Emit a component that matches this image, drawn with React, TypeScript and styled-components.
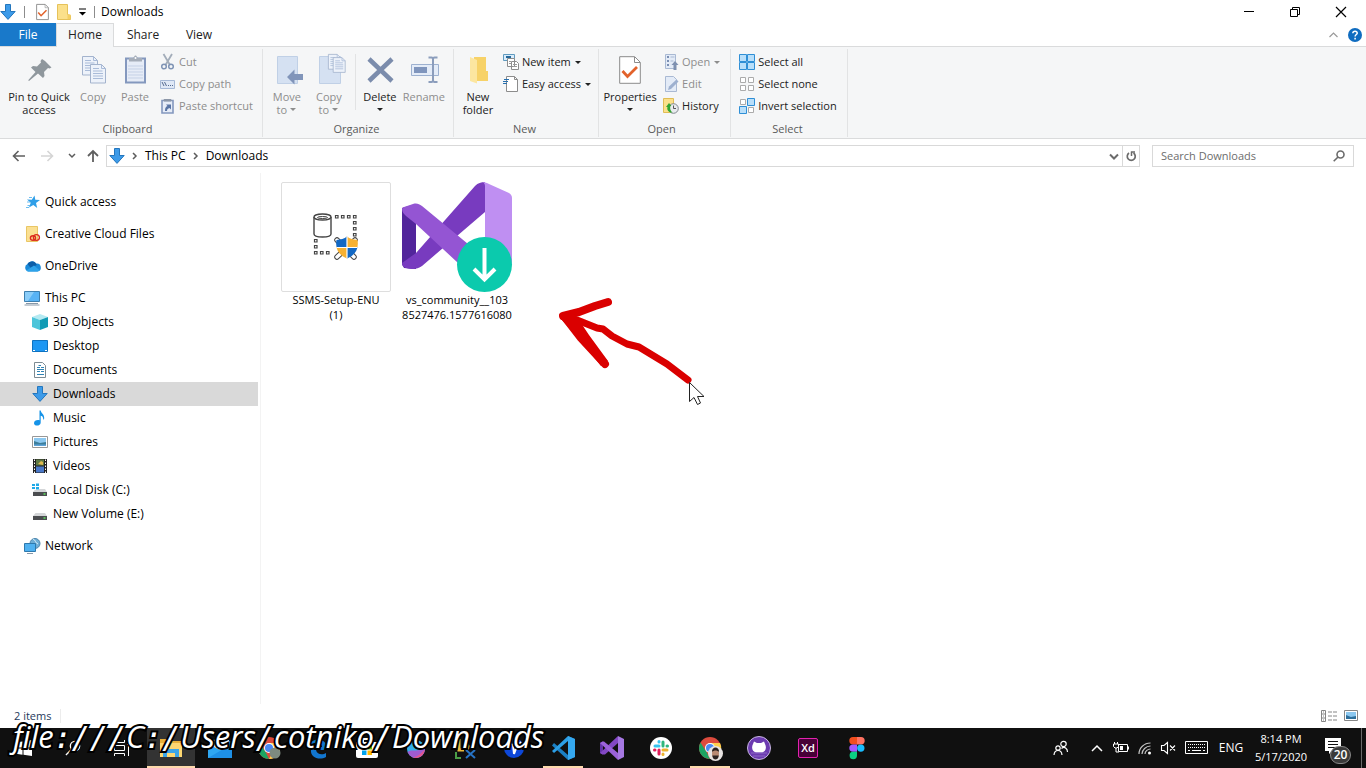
import React from "react";
import styled, { createGlobalStyle } from "styled-components";

const Global = createGlobalStyle`
  * { box-sizing: border-box; }
  html, body { margin: 0; height: 100%; }
  #root { height: 100%; }
  body { background: #fff; color: #000; overflow: hidden; }
  body, button, input { font-family: "Open Sans", "Noto Sans", sans-serif; font-size: 12px; line-height: 16px; }
  button { border: 0; padding: 0; margin: 0; background: transparent; color: inherit; }
  svg { display: block; flex: none; overflow: visible; }
`;

/* ---------- shell ---------- */

const Window = styled.div`
  position: relative;
  display: flex;
  flex-direction: column;
  height: 100vh;
`;

const TitleBar = styled.header`
  display: flex;
  align-items: center;
  height: 23px;
  padding-right: 2px;
`;

const Divider = styled.span<{ $h: number; $color?: string; $after?: number }>`
  flex: none;
  width: 1px;
  height: ${(p) => p.$h}px;
  margin-right: ${(p) => p.$after || 0}px;
  background: ${(p) => p.$color || "#8c8c8c"};
`;

const QuickTools = styled.div`
  display: flex;
  align-items: center;
  gap: 8px;
  padding-right: 6px;
`;

const Title = styled.h1`
  flex: 1;
  margin: 0;
  font-size: 12px;
  font-weight: 400;
`;

const IconButton = styled.button<{ $w?: number }>`
  display: flex;
  align-items: center;
  justify-content: center;
  flex: none;
  width: ${(p) => (p.$w ? p.$w + "px" : "auto")};
  align-self: stretch;
`;

const Tabs = styled.nav`
  display: flex;
  height: 24px;
  border-bottom: 1px solid #dadbdc;
`;

const Tab = styled.button<{ $kind?: "file" | "active"; $w: number }>`
  width: ${(p) => p.$w}px;
  height: ${(p) => (p.$kind === "active" ? 24 : 23)}px;
  color: ${(p) => (p.$kind === "file" ? "#fff" : "#222")};
  background: ${(p) => (p.$kind === "file" ? "#1979ca" : p.$kind === "active" ? "#f5f6f7" : "transparent")};
  border: ${(p) => (p.$kind === "active" ? "1px solid #dadbdc" : "0")};
  border-bottom: 0;
  padding-bottom: ${(p) => (p.$kind === "active" ? 2 : 0)}px;
`;

const TabTools = styled.div`
  display: flex;
  align-items: center;
  gap: 10px;
  margin-left: auto;
  padding-right: 4px;
`;

/* ---------- ribbon ---------- */

const Ribbon = styled.div`
  display: flex;
  height: 92px;
  padding-top: 2px;
  background: #f5f6f7;
  border-bottom: 1px solid #dadbdc;
`;

const Group = styled.section<{ $pad: string }>`
  display: flex;
  flex-direction: column;
  height: 88px;
  padding: ${(p) => p.$pad};
  border-right: 1px solid #e2e3e4;
`;

const GroupBody = styled.div`
  display: flex;
  height: 73px;
`;

const GroupName = styled.h2`
  margin: 0;
  font-size: 11px;
  font-weight: 400;
  text-align: center;
  color: #5a5a5a;
`;

const BigButton = styled.button<{ $w: number }>`
  display: flex;
  flex-direction: column;
  align-items: center;
  gap: 4px;
  width: ${(p) => p.$w}px;
  padding-top: 5px;
  font-size: 11px;
  line-height: 13px;
  white-space: nowrap;
  color: #222;
  &:disabled { color: #8d8d8d; }
`;

const BigLabel = styled.span`
  display: flex;
  flex-direction: column;
  align-items: center;
`;

const Line = styled.span`
  display: flex;
  align-items: center;
  gap: 2px;
  height: 13px;
`;

const SmallColumn = styled.div<{ $left: number }>`
  display: flex;
  flex-direction: column;
  padding: 2px 0 0 ${(p) => p.$left}px;
`;

const SmallButton = styled.button`
  display: flex;
  align-items: center;
  gap: 3px;
  height: 22px;
  font-size: 11px;
  white-space: nowrap;
  color: #222;
  &:disabled { color: #8d8d8d; }
`;

const Caret = styled.i`
  flex: none;
  margin: 0 1px;
  border: 3px solid transparent;
  border-top-color: currentColor;
  border-bottom: 0;
`;

const InnerRule = styled.span`
  width: 1px;
  height: 56px;
  margin: 5px 3px 0 5px;
  background: #e2e3e4;
`;

/* ---------- address row ---------- */

const AddressRow = styled.div`
  display: flex;
  align-items: center;
  height: 34px;
  padding-right: 12px;
`;

const NavButtons = styled.div`
  display: flex;
  align-items: center;
  gap: 11px;
  width: 106px;
  padding-left: 12px;
`;

const AddressBox = styled.div`
  display: flex;
  align-items: center;
  flex: 1;
  height: 22px;
  padding-left: 2px;
  border: 1px solid #d9d9d9;
`;

const Crumbs = styled.div`
  display: flex;
  align-items: center;
  flex: 1;
  gap: 6px;
`;

const Crumb = styled.a`
  color: #000;
  text-decoration: none;
`;

const SearchBox = styled.label`
  display: flex;
  align-items: center;
  width: 202px;
  height: 22px;
  margin-left: 12px;
  padding: 0 8px;
  border: 1px solid #d9d9d9;
`;

const SearchInput = styled.input`
  flex: 1;
  min-width: 0;
  padding: 0;
  border: 0;
  outline: 0;
  background: transparent;
  font-size: 11px;
  &::placeholder { color: #6d6d6d; opacity: 1; }
`;

/* ---------- body ---------- */

const Main = styled.div`
  display: flex;
  flex: 1;
  min-height: 0;
`;

const Sidebar = styled.nav`
  width: 261px;
  padding: 17px 2px 0 0;
  border-right: 1px solid #f3f3f3;
`;

const TreeItem = styled.a<{ $child?: boolean; $selected?: boolean; $gap?: boolean }>`
  display: flex;
  align-items: center;
  gap: 5px;
  height: 24px;
  margin-bottom: ${(p) => (p.$gap ? 8 : 0)}px;
  padding-left: ${(p) => (p.$child ? 32 : 24)}px;
  background: ${(p) => (p.$selected ? "#d9d9d9" : "transparent")};
  color: #000;
  text-decoration: none;
`;

const Files = styled.main`
  position: relative;
  display: flex;
  align-items: flex-start;
  flex: 1;
  gap: 11px;
  padding: 9px 20px;
`;

const FileTile = styled.figure`
  width: 110px;
  margin: 0;
`;

const Thumb = styled.div<{ $framed?: boolean }>`
  display: flex;
  align-items: center;
  justify-content: center;
  height: 110px;
  border: ${(p) => (p.$framed ? "1px solid #dedede" : "0")};
  border-radius: 2px;
`;

const FileName = styled.figcaption`
  text-align: center;
  font-size: 11px;
  line-height: 15px;
  white-space: nowrap;
`;

const RedArrow = styled.svg`
  position: absolute;
  left: 294px;
  top: 122px;
`;

const StatusBar = styled.footer`
  display: flex;
  align-items: center;
  gap: 9px;
  height: 24px;
  padding: 0 8px 0 14px;
  color: #1e395b;
  font-size: 11px;
`;

const ViewButtons = styled.div`
  display: flex;
  gap: 7px;
  margin-left: auto;
`;

/* ---------- taskbar ---------- */

const Taskbar = styled.div`
  display: flex;
  height: 40px;
  background: #101010;
  color: #fff;
`;

const Task = styled.button<{ $open?: boolean; $active?: boolean }>`
  position: relative;
  display: flex;
  align-items: center;
  justify-content: center;
  width: 48px;
  margin-right: 1px;
  background: ${(p) => (p.$active ? "#333" : "transparent")};
  &::after {
    content: "";
    position: absolute;
    bottom: 0;
    left: ${(p) => (p.$active ? 0 : 4)}px;
    right: ${(p) => (p.$active ? 0 : 4)}px;
    height: 2px;
    background: ${(p) => (p.$open ? "#fdd9ac" : "transparent")};
  }
`;

const Tray = styled.div`
  display: flex;
  align-items: center;
  margin-left: auto;
`;

const TrayButton = styled.button<{ $w: number }>`
  display: flex;
  align-items: center;
  justify-content: center;
  width: ${(p) => p.$w}px;
  height: 40px;
`;

const Clock = styled.time`
  width: 64px;
  text-align: center;
  font-size: 11px;
  line-height: 18px;
`;

const Notify = styled.button`
  position: relative;
  width: 24px;
  height: 40px;
  margin: 0 12px 0 12px;
`;

const NotifyGlyph = styled.span`
  display: block;
  padding-bottom: 4px;
`;

const Badge = styled.span`
  position: absolute;
  left: 5px;
  top: 18px;
  width: 21px;
  border: 1px solid #888;
  border-radius: 9px;
  background: #3a3a3a;
  color: #fff;
  font-weight: 600;
  line-height: 16px;
  text-align: center;
`;

const PathOverlay = styled.div`
  position: absolute;
  left: 13px;
  bottom: 10px;
  font: italic 500 31px/40px "Open Sans", "Noto Sans", sans-serif;
  color: #fff;
  white-space: nowrap;
  -webkit-text-stroke: 4px #000;
  paint-order: stroke fill;
`;

const Punct = styled.span`
  font-family: "DejaVu Sans Mono", monospace;
  font-size: 30px;
`;

const Cursor = styled.svg`
  position: absolute;
  left: 428px;
  top: 209px;
`;

/* ---------- icons ---------- */

type SvgProps = { w: number; h?: number; children: React.ReactNode };
const Svg = ({ w, h = w, children }: SvgProps) => (
  <svg width={w} height={h} viewBox={`0 0 ${w} ${h}`} fill="none" aria-hidden="true">
    {children}
  </svg>
);

const DownArrow = () => (
  <Svg w={16}>
    <path d="M5.500.500h5v7h4.700L8 15.400.8 7.500h4.700z" fill="#3d9be9" stroke="#2476bd" />
  </Svg>
);

const CheckSheet = ({ big }: { big?: boolean }) => (
  <svg width={big ? 22 : 13} height={big ? 28 : 16} viewBox="0 0 22 28" fill="none">
    <path d="M.7.7h15l5.600 5.600v21H.7z" fill="#fff" stroke="#8b8b8b" strokeWidth={big ? 1 : 1.6} />
    <path d="M15.500 1v5.500H21" stroke="#8b8b8b" />
    <path d="M3.500 15l5 5.500L18 11" stroke="#e2622b" strokeWidth="2.800" />
  </svg>
);

const YellowFolder = () => (
  <Svg w={14} h={16}>
    <path d="M.5.500h10v10l3 1v4H.5z" fill="#fbe08b" stroke="#e6c25a" />
    <path d="M10.500 10.500h3v4.500h-3z" fill="#f4cf63" />
  </Svg>
);

const Pin = () => (
  <Svg w={32}>
    <path d="M22 6l6.500 6.500-2 1-1.500-.5-4 4 .5 4-1.500 2-5-4.500L6 26l-.8-.8L12.500 17 8 12.500l2-1.500 4 .5 4-4-.5-1.500 1.500-2z" fill="#8f979d" transform="translate(0 1)" />
  </Svg>
);

const Page = ({ x, y }: { x: number; y: number }) => (
  <g transform={`translate(${x} ${y})`}>
    <path d="M.5.500h11l4 4v14.500H.5z" fill="#edf2fa" stroke="#a3b3cd" />
    <path d="M11.500.500v4h4M3 7h9.500M3 9.500h10M3 12h10M3 14.500h10M3 4.500h6" stroke="#a9bbd8" />
  </g>
);

const CopyIcon = () => (
  <Svg w={32}>
    <g transform="translate(5 2)">
      <Page x={0} y={0} />
      <Page x={8} y={8} />
    </g>
  </Svg>
);

const PasteIcon = () => (
  <Svg w={32}>
    <path d="M7 4.500h19v24H7z" fill="#e6ecf7" stroke="#8498be" strokeWidth="2" />
    <path d="M9 12h15M9 15h15M9 18h15M9 21h15M9 24h15" stroke="#c5d1e6" />
    <path d="M10 7.500V4h4l2-2.500h1L19 4h4v3.500z" fill="#a5adb9" />
    <circle cx="16.500" cy="4" r="1" fill="#fff" />
  </Svg>
);

const CutIcon = () => (
  <Svg w={16}>
    <path d="M3.500 0l6.500 11M12 0L5.500 11" stroke="#a3adba" strokeWidth="1.800" />
    <circle cx="4" cy="12.500" r="2.300" stroke="#7f94b5" strokeWidth="1.500" />
    <circle cx="11" cy="12.500" r="2.300" stroke="#7f94b5" strokeWidth="1.500" />
  </Svg>
);

const PathIcon = () => (
  <Svg w={16}>
    <path d="M.5 4.500h14v8H.5z" fill="#dfe8f6" stroke="#a5b8d6" />
    <path d="M2 6l2 4M4.500 6l2 4M8 9.500h1M10 9.500h1M12 9.500h1" stroke="#53698f" />
  </Svg>
);

const ShortcutIcon = () => (
  <Svg w={16}>
    <path d="M2 2.500h11v12.500H2z" fill="#e6ecf7" stroke="#8498be" strokeWidth="1.600" />
    <path d="M4 3V1.500h7V3z" fill="#8c97a8" stroke="#8c97a8" />
    <path d="M5 13c0-3.500 1-4.500 2.500-5L6 6.500h5v5L9.500 10C8 10.500 7 11 7 13z" fill="#5a75a5" />
  </Svg>
);

const MoveIcon = () => (
  <Svg w={32}>
    <path d="M6.500 2.500h20v27h-20z" fill="#d5e1f2" stroke="#c0d0e6" />
    <path d="M16 23l7.500-7.500v4.500H32v6h-8.500v4.500z" fill="#8195ba" />
  </Svg>
);

const CopyToIcon = () => (
  <Svg w={32}>
    <path d="M6.500 2.500h21v27h-21z" fill="#d5e1f2" stroke="#c0d0e6" />
    <g transform="translate(15 0) scale(.8)">
      <Page x={0} y={0} />
      <Page x={6} y={4} />
    </g>
  </Svg>
);

const DeleteIcon = () => (
  <Svg w={32}>
    <path d="M5 5l23 22M28 5L5 27" stroke="#7b8cac" strokeWidth="4.500" />
  </Svg>
);

const RenameIcon = () => (
  <Svg w={32}>
    <path d="M3.500 10.500h27v11h-27z" fill="#e4ecf8" stroke="#9db1d0" />
    <path d="M6 13h13v6H6z" fill="#7f95bd" />
    <path d="M20.500 3.500h3c1 0 1.500.500 1.500 1.500v21c0 1-.500 2-1.500 2h-3M29.500 3.500h-3c-1 0-1.500.500-1.500 1.500v21c0 1 .5 2 1.500 2h3" stroke="#8b9dbc" strokeWidth="2" />
  </Svg>
);

const NewFolderIcon = () => (
  <Svg w={32}>
    <path d="M12 3h12v14h2v10H12z" fill="#f7d268" />
    <path d="M8 3l7 3v23.500L8 27z" fill="#fce6a0" />
  </Svg>
);

const NewItemIcon = () => (
  <Svg w={16}>
    <path d="M.5.500h11v6H.5z" fill="#d9ecfb" stroke="#5f9abf" />
    <path d="M3 3h5" stroke="#26689a" strokeWidth="2" />
    <path d="M4.500 4.500h7v8h-7zM8.500 7.500h5l2 2v6h-7z" fill="#fff" stroke="#8c8c8c" />
    <path d="M10 10.500h4M10 12.500h4M6 7.500h2M6 9.500h2" stroke="#9a9a9a" />
  </Svg>
);

const EasyIcon = () => (
  <Svg w={16}>
    <path d="M3.500.500h8l3 3v12h-11z" fill="#fff" stroke="#8c8c8c" />
    <path d="M11.500.500v3h3" stroke="#8c8c8c" />
    <path d="M1 3.500h5M0 5.500h5M0 7.500h4" stroke="#276fae" />
  </Svg>
);

const OpenIcon = () => (
  <Svg w={16}>
    <path d="M2.500.500h10v14h-10z" fill="#e3ebf7" stroke="#a9b9d3" />
    <path d="M4 3h2M4 7h2M4 11h2" stroke="#7b8fb3" strokeWidth="2" />
    <path d="M7.500 3h4M7.500 7h3" stroke="#a9b9d3" />
    <path d="M12 7l3.500 4h-2v5h-3v-5h-2z" fill="#7e90b0" />
  </Svg>
);

const EditIcon = () => (
  <Svg w={16}>
    <path d="M2.500.500h8l3 3v12h-11z" fill="#e3ebf7" stroke="#a9b9d3" />
    <path d="M5 14l1-3.500 7.500-7 2 2L8 13z" fill="#9db0cf" />
  </Svg>
);

const HistoryIcon = () => (
  <Svg w={16}>
    <path d="M.5.500h10v14H.5z" fill="#fbe08b" stroke="#e0bd55" />
    <circle cx="10.500" cy="10.500" r="4.800" fill="#e8ebee" stroke="#808890" />
    <path d="M10.500 7.500v3h2.500" stroke="#555" />
    <path d="M3 9l3-4 2.500 3H7.500c-1 2 0 5 2 6.500C6 15 3.500 12 4.500 9z" fill="#31a531" />
  </Svg>
);

const Tiles = ({ on }: { on: number[] }) => (
  <Svg w={16}>
    {[0, 1, 2, 3].map((i) => {
      const x = (i % 2) * 8;
      const y = i > 1 ? 8 : 0;
      return on.includes(i) ? (
        <path key={i} d={`M${x + 0.5} ${y + 0.5}h7v7h-7z`} fill="#b9dffa" stroke="#2f8fd6" />
      ) : (
        <path key={i} d={`M${x + 1.5} ${y + 1.5}h5v5h-5z`} fill="#fff" stroke="#ababab" />
      );
    })}
  </Svg>
);

const Chevron = ({ d, w = 8, h = 8, color = "#5c5c5c", sw = 1.5 }: { d: string; w?: number; h?: number; color?: string; sw?: number }) => (
  <Svg w={w} h={h}>
    <path d={d} stroke={color} strokeWidth={sw} />
  </Svg>
);

const StarIcon = () => (
  <Svg w={16}>
    <path d="M10.500 1.500l.8 4.300 4.700.2-4 3 1.200 5L9.300 11 5 13.500l1.700-4.700L3 5.500l4.800.2z" fill="#2f9fe8" />
    <path d="M5 3.500h3M3 8h3M3.500 11.500h2.500M2 13.500h3" stroke="#6cbdf0" />
  </Svg>
);

const CreativeIcon = () => (
  <Svg w={16}>
    <path d="M2.500.500h11v15h-11z" fill="#fbe092" stroke="#e9c665" />
    <ellipse cx="9" cy="12" rx="2.600" ry="2.300" stroke="#dc2b1c" strokeWidth="1.400" />
    <ellipse cx="12.400" cy="11.500" rx="3" ry="2.900" stroke="#dc2b1c" strokeWidth="1.400" />
  </Svg>
);

const OneDriveIcon = () => (
  <Svg w={16}>
    <path d="M4 13.500a4 4 0 01-.5-7.500A5 5 0 0112 5.500a4 4 0 011.500 8z" fill="#1a8ad8" />
    <path d="M3.500 6A5 5 0 0112 5.500l.8 1.500-6 3z" fill="#0c5ea8" />
    <path d="M2 12.800l8-5.300 5.500 4.700a3.500 3.500 0 01-2 1.300H4z" fill="#2ea3ea" />
  </Svg>
);

const PcIcon = () => (
  <Svg w={16}>
    <path d="M.5 1.500h15v10H.5z" fill="#58b3f5" stroke="#3d7fae" />
    <path d="M1 2h9L4 11H1z" fill="#8acdf9" />
    <path d="M2 13.500h12M.5 15h15" stroke="#8798a8" />
  </Svg>
);

const CubeIcon = () => (
  <Svg w={16}>
    <path d="M0 3l8-3 8 3-8 3z" fill="#b5eaf2" />
    <path d="M0 3l8 3v10l-8-3z" fill="#4cc5da" />
    <path d="M16 3L8 6v10l8-3z" fill="#119bb5" />
  </Svg>
);

const DesktopIcon = () => (
  <Svg w={16}>
    <path d="M.5 2.500h15v11H.5z" fill="#1d97f3" stroke="#0f72c0" />
    <path d="M1 12.500h2M13 12.500h2" stroke="#fff" />
  </Svg>
);

const DocIcon = () => (
  <Svg w={16}>
    <path d="M2.500.500h8l3 3v12h-11z" fill="#fff" stroke="#7d8b93" />
    <path d="M5 5.500h3M9 5.500h3M5 7.500h7M5 9.500h3M9 9.500h3M5 12.500h7M6.500 3.500H9" stroke="#2f83b5" />
  </Svg>
);

const MusicIcon = () => (
  <Svg w={16}>
    <path d="M7.500.500h1.200c.5 3 3.800 3.500 3.500 8l-1 1.500c.2-3-1-4-2.500-4.200v6.700c0 4-6.700 4-6.700.8 0-2.800 3-3.600 5.500-3z" fill="#1593e8" />
  </Svg>
);

const PictureIcon = () => (
  <Svg w={16}>
    <path d="M.5 2.500h15v11H.5z" fill="#fff" stroke="#979797" />
    <path d="M2 4h12v8H2z" fill="#8cc8f0" />
    <path d="M2 7l6 2 6-1v4H2z" fill="#3d7e9b" />
    <path d="M2 10.500h12V12H2z" fill="#5da3d8" />
  </Svg>
);

const VideoIcon = () => (
  <Svg w={16}>
    <path d="M1 1h14v14H1z" fill="#222" />
    <path d="M4 1.500h8v6H4z" fill="#5f7a45" />
    <path d="M4 8.500h8v6H4z" fill="#4a79c9" />
    <path d="M6 6l3-3 2 1v3z" fill="#e0b94f" />
    <path d="M2.500 1.500v14M13.500 1.500v14" stroke="#fff" strokeDasharray="1.500 1.500" />
  </Svg>
);

const DriveIcon = ({ system }: { system?: boolean }) => (
  <Svg w={16}>
    <path d="M3.500 7h9.500l2 3H1z" fill="#d4d6d8" />
    <path d="M1 10h14v4H1z" fill="#4b4d50" />
    <path d="M11.500 12h2" stroke="#5be05b" strokeWidth="1.500" />
    {system && (
      <g>
        <path d="M0 1h7v7H0z" fill="#fff" />
        <path d="M0 2h3v2H0zM4 1.500h3V4H4zM0 5h3v2H0zM4 5h3v2.500H4z" fill="#1ea9e8" />
      </g>
    )}
  </Svg>
);

const NetworkIcon = () => (
  <Svg w={16}>
    <circle cx="11" cy="5.500" r="5" fill="#6faed6" stroke="#4b86ad" />
    <path d="M9 1c3 1 2 4 5 5" stroke="#d8eefa" />
    <path d="M.5 5.500h11v8H.5z" fill="#4fb1f0" stroke="#2e79ad" />
    <path d="M3 15.500h6" stroke="#8798a8" />
  </Svg>
);

const squares = [
  [21, 1], [27, 1], [33, 1], [39, 1], [39, 7], [39, 13], [39, 19],
  [0, 25], [0, 31], [0, 37], [6, 37], [12, 37],
];

const SsmsIcon = () => (
  <Svg w={46}>
    {squares.map(([x, y]) => (
      <path key={`${x}-${y}`} d={`M${x + 1.5} ${y + 0.5}h2.500v2.500h-2.500z`} stroke="#444" strokeWidth="1.200" />
    ))}
    <path d="M1 3v17c0 4 17 4 17 0V3" fill="#fff" stroke="#444" strokeWidth="1.400" />
    <ellipse cx="9.500" cy="3" rx="8.500" ry="3" fill="#fff" stroke="#444" strokeWidth="1.400" />
    <ellipse cx="9.500" cy="3.500" rx="5" ry="1" stroke="#444" />
    <path d="M24 26l17 17M42 26L24 43" stroke="#444" strokeWidth="5.500" strokeLinecap="round" />
    <path d="M24 26l17 17M42 26L24 43" stroke="#fff" strokeWidth="3.500" strokeLinecap="round" />
    <clipPath id="shield">
      <path d="M34 22.500c3 2.500 6 3 10.500 3.500 1.500 9-2 15-10.500 18.500-8.500-3.500-12-9.500-10.500-18.500 4.500-.5 7.500-1 10.500-3.500z" />
    </clipPath>
    <g clipPath="url(#shield)">
      <path d="M22 22h12v11H22zM34 33h12v12H34z" fill="#1268c4" />
      <path d="M34 22h12v11H34zM22 33h12v12H22z" fill="#f6b133" />
      <path d="M34 22v24M22 33.500h24" stroke="#fff" strokeWidth="1.200" />
    </g>
  </Svg>
);

const VsBigIcon = () => (
  <Svg w={110}>
    <path d="M0 26l14-4v65L2 86 0 82z" fill="#52259b" />
    <path d="M0 81l14-10L73 4c3-3 6-4 10-4v30L20 84c-4 3-10 4-16 2-3-1-4-2-4-5z" fill="#783bbf" />
    <path d="M81 0c2 0 4 1 6 2l20 9c2 1 3 3 3 5v62c0 4-1 5-3 6L83 94V4c0-2-1-3-2-4z" fill="#bf8ff2" />
    <path d="M0 27c0-1 1-2 2-2l9-3c4-1 6 0 9 2l63 52v30L14 42 4 34c-2-2-4-4-4-7z" fill="#9455d3" />
    <circle cx="82.500" cy="82.500" r="27.500" fill="#0bcaad" />
    <path d="M82.500 66v30M72 87l10.500 10.500L93 87" stroke="#fff" strokeWidth="4" />
  </Svg>
);

const ChromeIcon = ({ face }: { face?: boolean }) => (
  <Svg w={24}>
    <circle cx="12" cy="12" r="11" fill="#dd4b3e" />
    <path d="M2.500 6.500L8.500 16 12 23A11 11 0 012.500 6.500z" fill="#1da462" />
    <path d="M22 7H12l4.500 8L12 23A11 11 0 0022 7z" fill="#fdd04d" />
    <circle cx="12" cy="12" r="5" fill="#fff" />
    <circle cx="12" cy="12" r="4" fill="#4a8af4" />
    {face ? (
      <g>
        <circle cx="17.500" cy="17.500" r="7.500" fill="#e8e4e2" />
        <path d="M14 17c0-6 7-6 7 0 0 5-2 6-3.500 6S14 22 14 17z" fill="#b98a72" />
        <path d="M14 16c-.5-6 7.500-6 7 0-2-2-5-2-7 0zM14.300 19.500h6.500c-.5 3-2 4-3.300 4s-2.800-1-3.200-4z" fill="#2a211f" />
      </g>
    ) : (
      <circle cx="18" cy="17" r="5.500" fill="#7d8a80" />
    )}
  </Svg>
);

const VsCodeIcon = () => (
  <Svg w={24}>
    <path d="M17 0l7 3v18l-7 3L1 9.500 3 7l14 12z" fill="#1b80c4" />
    <path d="M17 0v5L3 17l-2-2z" fill="#2c9fe6" />
    <path d="M17 0l7 3v18l-7 3z" fill="#35a8ef" />
  </Svg>
);

const VsIcon = () => (
  <Svg w={24}>
    <path d="M0 7l3-1.500V18.500L0 17z" fill="#6433aa" />
    <path d="M0 17L18 0v7L5 18.500 2.500 18.500z" fill="#8348c4" />
    <path d="M0 7l2.500-1.500H4L18 17v7z" fill="#9b62da" />
    <path d="M18 0l6 3v18l-6 3z" fill="#a678e2" />
  </Svg>
);

const SlackIcon = () => (
  <Svg w={24}>
    <circle cx="12" cy="12" r="11" fill="#fff" />
    <g strokeWidth="3" strokeLinecap="round">
      <path d="M6 10h4" stroke="#36c5f0" />
      <path d="M10 5.500v.5" stroke="#36c5f0" />
      <path d="M14 6v4M18 10h.5" stroke="#2eb67d" />
      <path d="M14 14h4M14 18v.5" stroke="#ecb22e" />
      <path d="M10 14v4M5.500 14h.5" stroke="#e01e5a" />
    </g>
  </Svg>
);

const GithubIcon = () => (
  <Svg w={24}>
    <circle cx="12" cy="12" r="11.500" fill="#6c3bb0" stroke="#c9b8e2" />
    <path d="M6 8l1-2.500L10 7h4l3-1.500L18 8c2 4 .5 8-3 8.500H9C5.500 16 4 12 6 8z" fill="#fff" />
    <path d="M4 17h16M6 20h12" stroke="#8c68c4" />
  </Svg>
);

const XdTile = styled.span`
  width: 20px;
  height: 20px;
  border: 1px solid #e322b0;
  border-radius: 2px;
  background: #470137;
  color: #fff;
  font-size: 11px;
  font-weight: 600;
  line-height: 18px;
  text-align: center;
`;

const FigmaIcon = () => (
  <Svg w={16} h={24}>
    <path d="M8 1H4a3.700 3.700 0 000 7.400h4z" fill="#f24e1e" />
    <path d="M8 1h4a3.700 3.700 0 010 7.400H8z" fill="#ff7262" />
    <path d="M8 8.400H4a3.700 3.700 0 000 7.400h4z" fill="#a259ff" />
    <circle cx="11.800" cy="12.100" r="3.700" fill="#1abcfe" />
    <path d="M8 15.800H4A3.700 3.700 0 108 19.500z" fill="#0acf83" />
  </Svg>
);

const WindowsIcon = () => (
  <Svg w={16}>
    <path d="M0 2.300L6.500 1.400v6.100H0zM7.500 1.200L16 0v7.500H7.500zM0 8.500h6.500v6.200L0 13.800zM7.500 8.500H16V16l-8.500-1.200z" fill="#fff" />
  </Svg>
);

const SearchIcon = ({ color, w = 12, sw = 2 }: { color: string; w?: number; sw?: number }) => (
  <svg width={w} height={w} viewBox="0 0 12 12" fill="none">
    <circle cx="7.500" cy="4.500" r="3.500" stroke={color} strokeWidth={sw} />
    <path d="M5 7L.7 11.300" stroke={color} strokeWidth={sw} />
  </svg>
);

const TaskViewIcon = () => (
  <Svg w={16}>
    <path d="M.5 0v2.500h10V0M.5 16v-2.500h10V16M.5 5.500h10v5H.5zM14.500 0v16M13 4.500h3" stroke="#fff" />
  </Svg>
);

const ExplorerIcon = () => (
  <Svg w={24}>
    <path d="M1 3h8l2 2h12v5H1z" fill="#e8b03a" />
    <path d="M1 7h22v14H1z" fill="#fcd772" />
    <path d="M4 13h16v8h-4v-4H8v4H4z" fill="#3ba5e8" />
  </Svg>
);

const MailIcon = () => (
  <Svg w={24}>
    <path d="M0 6l12-5 12 5v15H0z" fill="#1787dc" />
    <path d="M3 4h18v7l-9 5-9-5z" fill="#e8f3fb" />
    <path d="M0 8l12 6 12-6v14H0z" fill="#2fa7f2" />
    <path d="M0 22L24 8v14z" fill="#1e90e6" />
  </Svg>
);

const EdgeIcon = () => (
  <Svg w={24}>
    <path d="M3 11C5 1 20 1 21 12v2H10c1 5 7 5 10 3v4C13 25 4 21 5 14c0-3 3-5 5-6-4 0-6 2-7 3zM10 11h6c0-4-6-4-6 0z" fill="#1276cf" />
  </Svg>
);

const StoreIcon = () => (
  <Svg w={24}>
    <path d="M8 6V3h8v3" stroke="#fff" strokeWidth="2" />
    <path d="M1 6h22v14a2 2 0 01-2 2H3a2 2 0 01-2-2z" fill="#fff" />
    <path d="M7 9h4.500v4.500H7z" fill="#f25022" />
    <path d="M12.500 9H17v4.500h-4.500z" fill="#7fba00" />
    <path d="M7 14.500h4.500V19H7z" fill="#00a4ef" />
    <path d="M12.500 14.500H17V19h-4.500z" fill="#ffb900" />
  </Svg>
);

const PaintIcon = () => (
  <Svg w={24}>
    <circle cx="12" cy="13" r="9" fill="#35b0ea" />
    <path d="M3.500 16C8 12 14 18 20.500 10A9 9 0 013.500 16z" fill="#a05bd0" />
    <path d="M9 21.500c5-1 8-4 11.800-8C20 20 14 23 9 21.500z" fill="#e4568c" />
    <path d="M11 6c-1-2 1-3 2-5 2 3 2 4 1 6z" fill="#f8b62c" />
  </Svg>
);

const LxIcon = () => (
  <Svg w={24}>
    <path d="M3 16v6h5" stroke="#4b9e46" strokeWidth="2" />
    <path d="M6 3v11h5M12 5l5 8" stroke="#e9b93a" strokeWidth="3" />
    <path d="M13 14l9 8M22 14l-9 8" stroke="#2773c4" strokeWidth="2" />
  </Svg>
);

const BlueIcon = () => (
  <Svg w={24}>
    <circle cx="12" cy="12" r="10" fill="#0d47d9" />
    <path d="M6 6l5 3 1 9 3-8 4-4" stroke="#fff" strokeWidth="2" />
  </Svg>
);

const PeopleIcon = () => (
  <Svg w={16}>
    <circle cx="10.500" cy="4" r="2.700" stroke="#fff" strokeWidth="1.200" />
    <circle cx="5" cy="8" r="2.200" stroke="#fff" strokeWidth="1.200" />
    <path d="M1 15c.5-6 7.500-6 8 0M8.500 8.500c3-2.500 6 0 6 3.500" stroke="#fff" strokeWidth="1.200" />
  </Svg>
);

const BatteryIcon = () => (
  <Svg w={16}>
    <path d="M5.500 4.500h9v7h-9zM15.500 6.500v3" stroke="#fff" />
    <path d="M7 6h3v4H7z" fill="#fff" />
    <path d="M1.500 2v2M4.500 2v2M3 8v4h3" stroke="#fff" />
    <path d="M.5 4h5v2.500L4 8H2L.5 6.500z" fill="#101010" stroke="#fff" />
  </Svg>
);

const WifiIcon = () => (
  <Svg w={14}>
    <path d="M1 13C1 7 6 2 12.500 2M4 13c0-4 4-8 8.500-8M7 13c0-3 3-5 5.500-5" stroke="#c4c4c4" strokeWidth="1.200" />
    <circle cx="11.500" cy="12" r="1.500" fill="#fff" />
  </Svg>
);

const MuteIcon = () => (
  <Svg w={16}>
    <path d="M1.500 5.500h2.500l3.500-3v11L4 10.500H1.500zM10 5.500l5 5M15 5.500l-5 5" stroke="#fff" strokeWidth="1.100" />
  </Svg>
);

const KeyboardIcon = () => (
  <Svg w={23} h={14}>
    <path d="M.5.500h22v12H.5z" stroke="#fff" />
    <path d="M3 3.500h17M3 6.500h17" stroke="#fff" strokeDasharray="1 1" />
    <path d="M3 9.500h2M7 9.500h9M18 9.500h2" stroke="#fff" />
  </Svg>
);

const Overlay = () => (
  <PathOverlay>
    file<Punct>:///</Punct>C<Punct>:/</Punct>Users<Punct>/</Punct>cotniko<Punct>/</Punct>Downloads
  </PathOverlay>
);

type Item = { name: string; icon: React.ReactNode; child?: boolean; selected?: boolean; gap?: boolean };
const tree: Item[] = [
  { name: "Quick access", icon: <StarIcon />, gap: true },
  { name: "Creative Cloud Files", icon: <CreativeIcon />, gap: true },
  { name: "OneDrive", icon: <OneDriveIcon />, gap: true },
  { name: "This PC", icon: <PcIcon /> },
  { name: "3D Objects", icon: <CubeIcon />, child: true },
  { name: "Desktop", icon: <DesktopIcon />, child: true },
  { name: "Documents", icon: <DocIcon />, child: true },
  { name: "Downloads", icon: <DownArrow />, child: true, selected: true },
  { name: "Music", icon: <MusicIcon />, child: true },
  { name: "Pictures", icon: <PictureIcon />, child: true },
  { name: "Videos", icon: <VideoIcon />, child: true },
  { name: "Local Disk (C:)", icon: <DriveIcon system />, child: true },
  { name: "New Volume (E:)", icon: <DriveIcon />, child: true, gap: true },
  { name: "Network", icon: <NetworkIcon /> },
];

type TaskItem = { name: string; icon: React.ReactNode; open?: boolean; active?: boolean };
const tasks: TaskItem[] = [
  { name: "Start", icon: <WindowsIcon /> },
  { name: "Search", icon: <SearchIcon color="#fff" w={16} sw={1} /> },
  { name: "Task View", icon: <TaskViewIcon /> },
  { name: "File Explorer", icon: <ExplorerIcon />, open: true, active: true },
  { name: "Mail", icon: <MailIcon /> },
  { name: "Chrome", icon: <ChromeIcon /> },
  { name: "Edge", icon: <EdgeIcon /> },
  { name: "Store", icon: <StoreIcon /> },
  { name: "Paint 3D", icon: <PaintIcon /> },
  { name: "Terminal", icon: <LxIcon /> },
  { name: "Sourcetree", icon: <BlueIcon /> },
  { name: "Visual Studio Code", icon: <VsCodeIcon />, open: true },
  { name: "Visual Studio", icon: <VsIcon /> },
  { name: "Slack", icon: <SlackIcon /> },
  { name: "Chrome profile", icon: <ChromeIcon face />, open: true },
  { name: "GitHub Desktop", icon: <GithubIcon /> },
  { name: "Adobe XD", icon: <XdTile>Xd</XdTile> },
  { name: "Figma", icon: <FigmaIcon /> },
];

type BigProps = { w: number; icon: React.ReactNode; lines: string[]; caret?: boolean; disabled?: boolean };
const Big = ({ w, icon, lines, caret, disabled }: BigProps) => (
  <BigButton $w={w} disabled={disabled}>
    {icon}
    <BigLabel>
      {lines.map((text, i) => (
        <Line key={i}>
          {text}
          {caret && i === lines.length - 1 && i > 0 && <Caret />}
        </Line>
      ))}
      {caret && lines.length === 1 && (
        <Line>
          <Caret />
        </Line>
      )}
    </BigLabel>
  </BigButton>
);

export default function App() {
  return (
    <>
      <Global />
      <Window>
        <TitleBar>
          <QuickTools>
            <DownArrow />
            <Divider $h={12} $after={3} />
            <CheckSheet />
            <YellowFolder />
            <IconButton aria-label="Customize toolbar">
              <Svg w={7} h={8}>
                <path d="M0 1h7" stroke="#000" />
                <path d="M0 4h7L3.500 7.500z" fill="#000" />
              </Svg>
            </IconButton>
            <Divider $h={12} />
          </QuickTools>
          <Title>Downloads</Title>
          <IconButton $w={46} aria-label="Minimize">
            <Svg w={10}><path d="M0 4.500h10" stroke="#000" /></Svg>
          </IconButton>
          <IconButton $w={46} aria-label="Restore">
            <Svg w={10}><path d="M.5 2.500h7v7h-7zM2.500 2.500v-2h7v7h-2" stroke="#000" /></Svg>
          </IconButton>
          <IconButton $w={46} aria-label="Close">
            <Svg w={10}><path d="M0 0l10 10M10 0L0 10" stroke="#000" strokeWidth="1.200" /></Svg>
          </IconButton>
        </TitleBar>

        <Tabs>
          <Tab $kind="file" $w={56}>File</Tab>
          <Tab $kind="active" $w={58}>Home</Tab>
          <Tab $w={58}>Share</Tab>
          <Tab $w={54}>View</Tab>
          <TabTools>
            <IconButton aria-label="Collapse ribbon">
              <Chevron d="M.5 6L4.500 2l4 4" w={9} color="#9a9a9a" sw={1.2} />
            </IconButton>
            <IconButton aria-label="Help">
              <Svg w={14}>
                <circle cx="7" cy="7" r="7" fill="#0f6cc0" />
                <path d="M4.800 5.300C5 2.500 9.500 2.800 9.200 5.300 9 6.600 7.200 6.600 7.100 8.500M7.100 9.800v1.600" stroke="#fff" strokeWidth="1.500" />
              </Svg>
            </IconButton>
          </TabTools>
        </Tabs>

        <Ribbon>
          <Group $pad="0 9px 0 2px">
            <GroupBody>
              <Big w={74} icon={<Pin />} lines={["Pin to Quick", "access"]} />
              <Big w={34} icon={<CopyIcon />} lines={["Copy"]} disabled />
              <Big w={50} icon={<PasteIcon />} lines={["Paste"]} disabled />
              <SmallColumn $left={0}>
                <SmallButton disabled><CutIcon />Cut</SmallButton>
                <SmallButton disabled><PathIcon />Copy path</SmallButton>
                <SmallButton disabled><ShortcutIcon />Paste shortcut</SmallButton>
              </SmallColumn>
            </GroupBody>
            <GroupName>Clipboard</GroupName>
          </Group>
          <Group $pad="0 6px 0 3px">
            <GroupBody>
              <Big w={42} icon={<MoveIcon />} lines={["Move", "to"]} caret disabled />
              <Big w={42} icon={<CopyToIcon />} lines={["Copy", "to"]} caret disabled />
              <InnerRule />
              <Big w={42} icon={<DeleteIcon />} lines={["Delete"]} caret />
              <Big w={46} icon={<RenameIcon />} lines={["Rename"]} disabled />
            </GroupBody>
            <GroupName>Organize</GroupName>
          </Group>
          <Group $pad="0 6px 0 3px">
            <GroupBody>
              <Big w={42} icon={<NewFolderIcon />} lines={["New", "folder"]} />
              <SmallColumn $left={4}>
                <SmallButton><NewItemIcon />New item<Caret /></SmallButton>
                <SmallButton><EasyIcon />Easy access<Caret /></SmallButton>
              </SmallColumn>
            </GroupBody>
            <GroupName>New</GroupName>
          </Group>
          <Group $pad="0 9px 0 3px">
            <GroupBody>
              <Big w={56} icon={<Svg w={32}><g transform="translate(5 2)"><CheckSheet big /></g></Svg>} lines={["Properties"]} caret />
              <SmallColumn $left={5}>
                <SmallButton disabled><OpenIcon />Open<Caret /></SmallButton>
                <SmallButton disabled><EditIcon />Edit</SmallButton>
                <SmallButton><HistoryIcon />History</SmallButton>
              </SmallColumn>
            </GroupBody>
            <GroupName>Open</GroupName>
          </Group>
          <Group $pad="0 10px 0 7px">
            <GroupBody>
              <SmallColumn $left={1}>
                <SmallButton><Tiles on={[0, 1, 2, 3]} />Select all</SmallButton>
                <SmallButton><Tiles on={[]} />Select none</SmallButton>
                <SmallButton><Tiles on={[1, 2]} />Invert selection</SmallButton>
              </SmallColumn>
            </GroupBody>
            <GroupName>Select</GroupName>
          </Group>
        </Ribbon>

        <AddressRow>
          <NavButtons>
            <IconButton aria-label="Back">
              <Svg w={14} h={12}><path d="M13 6H1.500M6.500 1l-5 5 5 5" stroke="#5f5f5f" strokeWidth="1.600" /></Svg>
            </IconButton>
            <IconButton $w={20} aria-label="Forward">
              <Svg w={14} h={12}><path d="M1 6h11.500M7.500 1l5 5-5 5" stroke="#d5d5d5" strokeWidth="1.600" /></Svg>
            </IconButton>
            <IconButton aria-label="Recent locations"><Chevron d="M1 2l3 3 3-3" /></IconButton>
            <IconButton aria-label="Up">
              <Svg w={12}><path d="M6 12V1.500M1 6l5-5 5 5" stroke="#5f5f5f" strokeWidth="1.800" /></Svg>
            </IconButton>
          </NavButtons>
          <AddressBox>
            <Crumbs>
              <DownArrow />
              <Chevron d="M2 1l3 3-3 3" />
              <Crumb href="#pc">This PC</Crumb>
              <Chevron d="M2 1l3 3-3 3" />
              <Crumb href="#downloads">Downloads</Crumb>
            </Crumbs>
            <IconButton $w={16} aria-label="Previous locations">
              <Chevron d="M1 2.500l4 4 4-4" w={10} color="#6b6b6b" sw={2} />
            </IconButton>
            <Divider $h={20} $color="#d9d9d9" />
            <IconButton $w={16} aria-label="Refresh">
              <Svg w={10}>
                <path d="M3 2A4 4 0 107.500 2" stroke="#6b6b6b" strokeWidth="1.700" />
                <path d="M5 1h4M5.500 .5v4.500" stroke="#6b6b6b" strokeWidth="1.500" />
              </Svg>
            </IconButton>
          </AddressBox>
          <SearchBox>
            <SearchInput aria-label="Search Downloads" placeholder="Search Downloads" />
            <SearchIcon color="#6b6b6b" sw={1.6} />
          </SearchBox>
        </AddressRow>

        <Main>
          <Sidebar>
            {tree.map((t) => (
              <TreeItem key={t.name} href="#" $child={t.child} $selected={t.selected} $gap={t.gap}>
                {t.icon}
                {t.name}
              </TreeItem>
            ))}
          </Sidebar>
          <Files>
            <FileTile>
              <Thumb $framed><SsmsIcon /></Thumb>
              <FileName>SSMS-Setup-ENU<br />(1)</FileName>
            </FileTile>
            <FileTile>
              <Thumb><VsBigIcon /></Thumb>
              <FileName>vs_community__103<br />8527476.1577616080</FileName>
            </FileTile>
            <RedArrow width="140" height="92" viewBox="0 0 140 92" fill="none">
              <path d="M6 24L14 18L26 28L34 40L53 66L46 71L30 51z" fill="#da0000" />
              <path d="M8 21L24 17L40 11L53 7M9 21L26 43L50 69" stroke="#da0000" strokeWidth="8" strokeLinecap="round" strokeLinejoin="round" />
              <path d="M9 21L22 25L42 33L48 34L57 41L72 49L84 52L112 69L133 85" stroke="#da0000" strokeWidth="7" strokeLinecap="round" strokeLinejoin="round" />
            </RedArrow>
            <Cursor width="16" height="24" viewBox="0 0 16 24" fill="#fff">
              <path d="M.5.500v19l4.500-4 3.500 7 3-1.500-3-6.500h6.500z" stroke="#222" />
            </Cursor>
          </Files>
        </Main>

        <StatusBar>
          2 items
          <Divider $h={14} $color="#ececec" />
          <ViewButtons>
            <IconButton aria-label="Details view">
              <Svg w={16} h={12}>
                <path d="M.5.500h4v11h-4zM.5 4h4M.5 8h4M2 2h1M2 6h1M2 10h1M7 2h4M12 2h4M7 6h4M12 6h4M7 10h4M12 10h4" stroke="#868686" />
              </Svg>
            </IconButton>
            <IconButton aria-label="Thumbnail view">
              <Svg w={14} h={12}>
                <path d="M.5.500h13v10H.5z" fill="#fff" stroke="#868686" />
                <path d="M2 2h10v7H2z" fill="#8cc8f0" />
                <path d="M2 5l5 2 5-1v3H2z" fill="#2e6f9b" />
              </Svg>
            </IconButton>
          </ViewButtons>
        </StatusBar>

        <Taskbar>
          {tasks.map((t) => (
            <Task key={t.name} aria-label={t.name} $open={t.open} $active={t.active}>
              {t.icon}
            </Task>
          ))}
          <Tray>
            <TrayButton $w={48} aria-label="People"><PeopleIcon /></TrayButton>
            <TrayButton $w={24} aria-label="Show hidden icons">
              <Chevron d="M1 8l5-5 5 5" w={12} h={11} color="#fff" />
            </TrayButton>
            <TrayButton $w={24} aria-label="Battery"><BatteryIcon /></TrayButton>
            <TrayButton $w={24} aria-label="Network"><WifiIcon /></TrayButton>
            <TrayButton $w={22} aria-label="Volume"><MuteIcon /></TrayButton>
            <TrayButton $w={34} aria-label="Touch keyboard"><KeyboardIcon /></TrayButton>
            <TrayButton $w={36}>ENG</TrayButton>
            <Clock>8:14 PM<br />5/17/2020</Clock>
            <Notify aria-label="20 notifications">
              <NotifyGlyph>
                <Svg w={16}>
                  <path d="M0 0h16v13h-9l-3 3v-3H0z" fill="#fff" />
                  <path d="M3 3.500h10M3 6.500h10M3 9.500h7" stroke="#101010" />
                </Svg>
              </NotifyGlyph>
              <Badge>20</Badge>
            </Notify>
            <Divider $h={40} $color="#6a6a6a" />
            <TrayButton $w={4} aria-label="Show desktop" />
          </Tray>
        </Taskbar>
        <Overlay />
      </Window>
    </>
  );
}
